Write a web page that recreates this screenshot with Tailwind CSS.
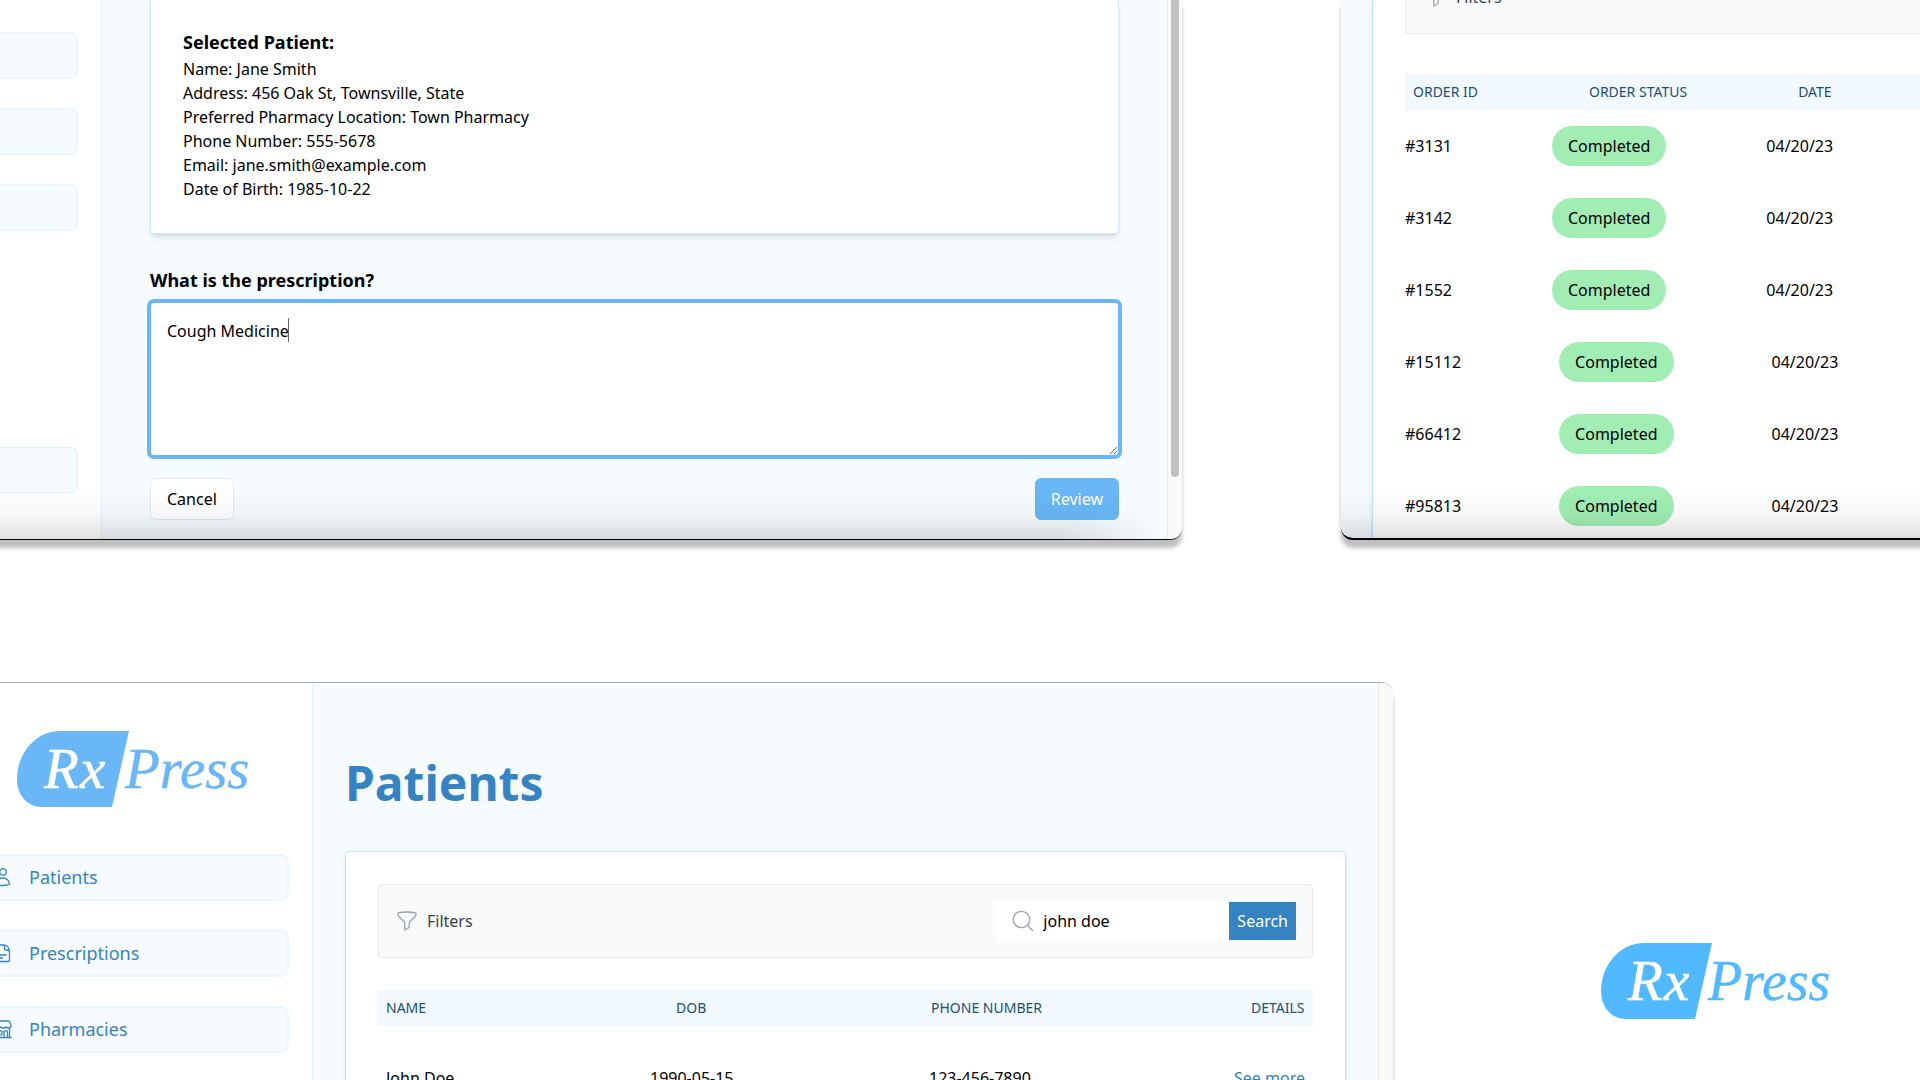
<!DOCTYPE html>
<html lang="en">
<head>
<meta charset="utf-8">
<title>RxPress</title>
<script src="https://cdn.jsdelivr.net/npm/@tailwindcss/browser@4"></script>
</head>
<body class="flex h-screen flex-col overflow-hidden bg-white font-['Noto_Sans',sans-serif] text-base text-black">

<!-- Upper windows -->
<div class="grid h-[540px] shrink-0 grid-cols-[1182fr_579fr] gap-[159px]">

  <!-- New prescription window -->
  <section class="relative -ml-2 flex min-w-0 overflow-hidden rounded-br-xl border-b border-black bg-white pl-2 shadow-[0_8px_4px_rgba(0,0,0,0.25)]">
    <aside class="flex w-[102px] shrink-0 flex-col border-r border-[#e0f2fe] pt-8 pr-[23px] pb-[46px]">
      <div class="flex flex-col gap-[29px]">
        <div class="h-[47px] rounded-r-lg border-2 border-l-0 border-[#ebf6ff] bg-[#f6fbff]"></div>
        <div class="h-[47px] rounded-r-lg border-2 border-l-0 border-[#ebf6ff] bg-[#f6fbff]"></div>
        <div class="h-[47px] rounded-r-lg border-2 border-l-0 border-[#ebf6ff] bg-[#f6fbff]"></div>
      </div>
      <div class="mt-auto h-[46px] rounded-r-lg border border-l-0 border-[#d9f1fe] bg-[#f6fbff]"></div>
    </aside>
    <main class="min-w-0 flex-1 bg-[#f6fbff] px-12">
      <div class="rounded-b border border-t-0 border-[#cfe8fb] bg-white px-8 pt-7 pb-8 shadow-md">
        <h2 class="pb-px text-lg leading-7 font-bold">Selected Patient:</h2>
        <p>Name: Jane Smith</p>
        <p>Address: 456 Oak St, Townsville, State</p>
        <p>Preferred Pharmacy Location: Town Pharmacy</p>
        <p>Phone Number: 555-5678</p>
        <p>Email: jane.smith@example.com</p>
        <p>Date of Birth: 1985-10-22</p>
      </div>
      <form class="pt-8">
        <label for="rx" class="block text-lg leading-7 font-bold">What is the prescription?</label>
        <div class="relative mt-2">
          <textarea id="rx" class="block h-[154px] w-full resize rounded border border-[#69b7f7] bg-white p-4 ring-3 ring-[#69b7f7] outline-none">Cough Medicine</textarea>
          <span class="absolute top-4 left-[138px] h-6 w-px bg-black/60"></span>
        </div>
        <div class="mt-[22px] flex justify-between">
          <button type="button" class="rounded-md border border-gray-200 bg-white px-4 py-2">Cancel</button>
          <button type="button" class="rounded-md border border-[#69b7f7] bg-[#69b7f7] px-[15px] py-2 text-white">Review</button>
        </div>
      </form>
    </main>
    <div class="flex w-[15px] shrink-0 justify-center border-l border-[#e8e8e8] bg-[#fafafa]">
      <div class="h-[477px] w-2 rounded-b-full bg-[#c1c1c1]"></div>
    </div>
    <div class="pointer-events-none absolute right-5 bottom-0 left-0 h-12 bg-linear-to-t from-black/12 via-black/3 to-transparent [mask-image:linear-gradient(to_left,transparent,black_100px)]"></div>
  </section>

  <!-- Orders window -->
  <section class="relative -mr-2 min-w-0 overflow-hidden rounded-bl-xl border-b-2 border-black bg-[#f6fbff] pl-[31px] shadow-[0_8px_4px_rgba(0,0,0,0.25)]">
    <div class="h-full border-l border-[#b9e2fb] bg-white pl-8 shadow-md">
      <div class="relative h-[34px] rounded-bl border-b border-l border-gray-200 bg-gray-50">
        <button type="button" class="absolute -top-[15px] left-[18px] flex items-center gap-2 text-gray-700">
          <svg class="size-6 text-gray-400" viewBox="0 0 24 24" fill="none" stroke="currentColor" stroke-width="1.3" stroke-linejoin="round"><path d="M12 3c2.800 0 5.500.2 8.200.6.500.1.800.5.800 1v1.100c0 .600-.200 1.200-.700 1.600l-5.400 5.400c-.400.400-.700 1-.700 1.600v3c0 .900-.500 1.600-1.200 2l-3.200 1.700v-6.700c0-.600-.200-1.200-.7-1.600L3.700 7.300C3.200 6.900 3 6.300 3 5.700V4.600c0-.500.400-.9.900-1C6.500 3.200 9.200 3 12 3Z"/></svg>
          Filters
        </button>
      </div>
      <table class="mt-10 block whitespace-nowrap">
        <thead class="block">
          <tr class="flex gap-[111px] bg-[#f1f9ff] px-2 py-2 text-sm text-[#1f4e73]">
            <th class="font-normal">ORDER ID</th><th class="font-normal">ORDER STATUS</th><th class="font-normal">DATE</th>
          </tr>
        </thead>
        <tbody class="block">
          <tr class="flex h-[72px] items-center gap-[100px]"><td>#3131</td><td class="rounded-[20px] bg-[#a1edb3] px-4 py-2">Completed</td><td>04/20/23</td></tr>
          <tr class="flex h-[72px] items-center gap-[100px]"><td>#3142</td><td class="rounded-[20px] bg-[#a1edb3] px-4 py-2">Completed</td><td>04/20/23</td></tr>
          <tr class="flex h-[72px] items-center gap-[100px]"><td>#1552</td><td class="rounded-[20px] bg-[#a1edb3] px-4 py-2">Completed</td><td>04/20/23</td></tr>
          <tr class="flex h-[72px] items-center gap-[98px]"><td>#15112</td><td class="rounded-[20px] bg-[#a1edb3] px-4 py-2">Completed</td><td>04/20/23</td></tr>
          <tr class="flex h-[72px] items-center gap-[98px]"><td>#66412</td><td class="rounded-[20px] bg-[#a1edb3] px-4 py-2">Completed</td><td>04/20/23</td></tr>
          <tr class="flex h-[72px] items-center gap-[98px]"><td>#95813</td><td class="rounded-[20px] bg-[#a1edb3] px-4 py-2">Completed</td><td>04/20/23</td></tr>
        </tbody>
      </table>
    </div>
    <div class="pointer-events-none absolute right-0 bottom-0 left-0 h-12 bg-linear-to-t from-black/12 via-black/3 to-transparent"></div>
  </section>
</div>

<!-- Lower area -->
<div class="mt-[142px] grid min-h-0 flex-1 grid-cols-[1393fr_527fr]">

  <!-- Patients window -->
  <section class="flex min-w-0 overflow-hidden rounded-tr-xl border-t border-[#a9adb0] bg-white shadow-[0_8px_4px_rgba(0,0,0,0.25)]">
    <aside class="w-[313px] shrink-0 border-r border-[#e0f2fe] pt-12 pr-[23px]">
      <svg class="ml-[17px] h-[76px] w-[236px] overflow-visible" viewBox="0 0 236 76">
        <path d="M43 0H112L95 76H25C10 76 0 64 0 48C0 22 19 0 43 0Z" fill="#69b7f7"/>
        <text x="27" y="57" font-family="'Liberation Serif', serif" font-style="italic" font-size="57" fill="#fff" stroke="#fff" stroke-width=".6">R<tspan x="63">x</tspan></text>
        <text x="108" y="57" font-family="'Liberation Serif', serif" font-style="italic" font-size="57" fill="#69b7f7" stroke="#69b7f7" stroke-width=".4">Press</text>
      </svg>
      <nav class="mt-[47px] flex flex-col gap-[29px] text-lg text-[#3583c0]">
        <a href="#" class="flex h-[47px] items-center gap-[17px] rounded-r-lg border-2 border-l-0 border-[#ebf6ff] bg-[#f6fbff] pb-0.5">
          <svg class="h-5 w-3 shrink-0" viewBox="0 0 12 20" fill="none" stroke="currentColor" stroke-width="1.3"><circle cx="3" cy="5" r="3.300"/><path d="M-4 17C-4 13-.5 11 3 11s6.500 2.500 6.500 6c-1.800 1.200-4 1.500-6.500 1.500S-2.200 18.200-4 17Z"/></svg>
          Patients
        </a>
        <a href="#" class="flex h-[47px] items-center gap-[17px] rounded-r-lg border-2 border-l-0 border-[#ebf6ff] bg-[#f6fbff] pb-0.5">
          <svg class="h-5 w-3 shrink-0" viewBox="0 0 12 20" fill="none" stroke="currentColor" stroke-width="1.3" stroke-linejoin="round"><path d="M-4 2H3C7 2 9.500 5 9.500 9v8.500c0 .6-.4 1-1 1H-4M3 2c1.500.5 1.500 1.500 1.500 3v1c0 .6.400 1 1 1h1c1.500 0 3 .500 3 2M-1 12H6.500M-1 15H3"/></svg>
          Prescriptions
        </a>
        <a href="#" class="flex h-[47px] items-center gap-[17px] rounded-r-lg border-2 border-l-0 border-[#ebf6ff] bg-[#f6fbff] pb-0.5">
          <svg class="h-5 w-3 shrink-0" viewBox="0 0 12 20" fill="none" stroke="currentColor" stroke-width="1.3" stroke-linejoin="round"><path d="M-6 2H9l2 3.500c.8 2-1 3.500-2.500 3.500C7 9 6 8 6 8S5 9 3.500 9 1 8 1 8-0 9-1 9M-6 18.500H11.500M9.500 9v9.500M4 18.500v-6c0-.4.300-.7.700-.7h2.100c.4 0 .7.300.7.700v6M-3 11.800H1.300c.4 0 .7.300.7.700v2.600c0 .4-.3.700-.7.700H-3"/></svg>
          Pharmacies
        </a>
      </nav>
    </aside>
    <main class="min-w-0 flex-1 bg-[#f6fbff] pt-[70px] pr-8 pl-8">
      <h1 class="text-5xl leading-[60px] font-bold text-[#3583c0]">Patients</h1>
      <div class="mt-[38px] h-80 rounded border border-[#c2e2fa] bg-white p-8 shadow-md">
        <div class="flex items-center justify-between rounded border border-gray-200 bg-gray-50 p-4">
          <button type="button" class="flex items-center gap-2 text-gray-700">
            <svg class="size-6 text-gray-400" viewBox="0 0 24 24" fill="none" stroke="currentColor" stroke-width="1.3" stroke-linejoin="round"><path d="M12 3c2.800 0 5.500.2 8.200.6.500.1.800.5.800 1v1.100c0 .600-.200 1.200-.700 1.600l-5.400 5.400c-.400.400-.700 1-.700 1.600v3c0 .900-.500 1.600-1.200 2l-3.200 1.700v-6.700c0-.600-.200-1.200-.7-1.600L3.700 7.300C3.200 6.900 3 6.300 3 5.700V4.600c0-.500.400-.9.900-1C6.500 3.200 9.200 3 12 3Z"/></svg>
            Filters
          </button>
          <form class="flex items-center">
            <label for="q" class="flex h-10 w-12 items-center justify-end bg-white pr-2">
              <svg class="size-6 text-gray-400" viewBox="0 0 24 24" fill="none" stroke="currentColor" stroke-width="1.3" stroke-linecap="round"><circle cx="10.500" cy="10.500" r="8.200"/><path d="M16.500 16.500L21.500 21.500"/></svg>
            </label>
            <input id="q" type="text" value="john doe" class="h-10 w-[186px] bg-white outline-none">
            <button type="button" class="h-[38px] bg-[#3583c0] px-2 text-white">Search</button>
          </form>
        </div>
        <table class="mt-8 block whitespace-nowrap">
          <thead class="block">
            <tr class="grid grid-cols-[290fr_255fr_320fr_54px] bg-[#f1f9ff] p-2 text-left text-sm text-[#1f4e73]">
              <th class="font-normal">NAME</th><th class="font-normal">DOB</th><th class="font-normal">PHONE NUMBER</th><th class="font-normal">DETAILS</th>
            </tr>
          </thead>
          <tbody class="block">
            <tr class="grid grid-cols-[264fr_279fr_305fr_71px] px-2 py-10">
              <td>John Doe</td><td>1990-05-15</td><td>123-456-7890</td><td><a href="#" class="text-[#3583c0]">See more</a></td>
            </tr>
          </tbody>
        </table>
      </div>
    </main>
    <div class="w-[15px] shrink-0 border-l border-[#e8e8e8] bg-[#fafafa]"></div>
  </section>

  <!-- Brand mark -->
  <div class="flex justify-end pt-[261px] pr-[84px]">
    <svg class="h-[76px] w-[235px] overflow-visible" viewBox="0 0 235 76">
      <path d="M43 0H111L94 76H25C10 76 0 64 0 48C0 22 19 0 43 0Z" fill="#53b9ff"/>
      <text x="27" y="57" font-family="'Liberation Serif', serif" font-style="italic" font-size="57" fill="#fff" stroke="#fff" stroke-width=".6">R<tspan x="63">x</tspan></text>
      <text x="107" y="57" font-family="'Liberation Serif', serif" font-style="italic" font-size="56" fill="#53b9ff" stroke="#53b9ff" stroke-width=".4">Press</text>
    </svg>
  </div>
</div>
</body>
</html>
